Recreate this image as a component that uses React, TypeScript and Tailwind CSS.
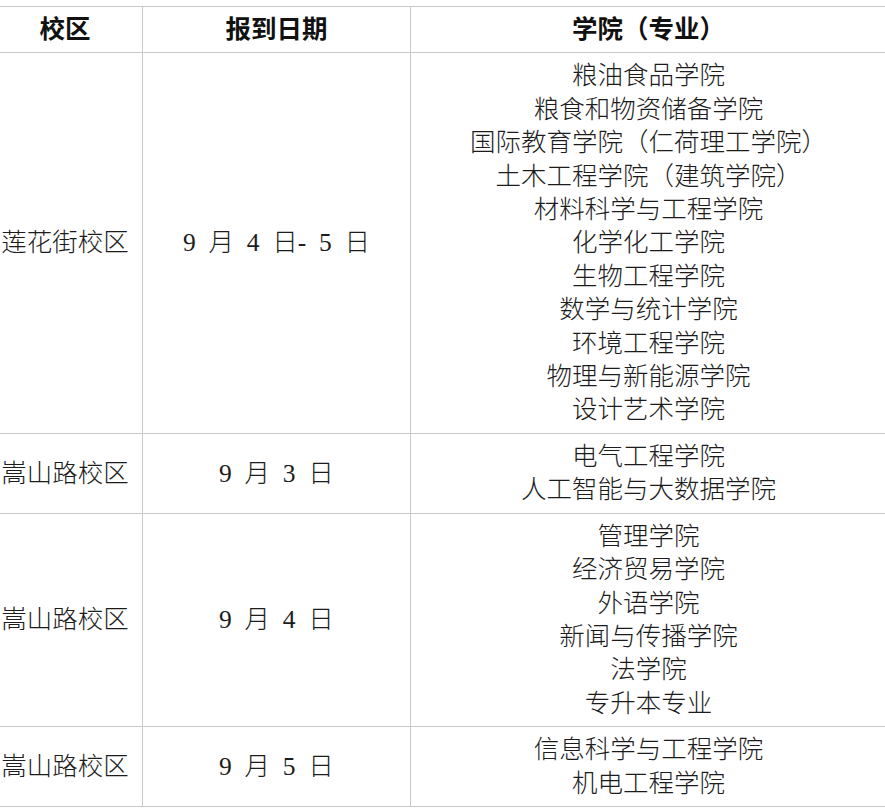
import React from 'react';

interface Row {
  campus: string;
  date: string;
  colleges: string[];
}

const rows: Row[] = [
  {
    campus: '莲花街校区',
    date: '9 月 4 日- 5 日',
    colleges: [
      '粮油食品学院',
      '粮食和物资储备学院',
      '国际教育学院（仁荷理工学院）',
      '土木工程学院（建筑学院）',
      '材料科学与工程学院',
      '化学化工学院',
      '生物工程学院',
      '数学与统计学院',
      '环境工程学院',
      '物理与新能源学院',
      '设计艺术学院',
    ],
  },
  {
    campus: '嵩山路校区',
    date: '9 月 3 日',
    colleges: ['电气工程学院', '人工智能与大数据学院'],
  },
  {
    campus: '嵩山路校区',
    date: '9 月 4 日',
    colleges: ['管理学院', '经济贸易学院', '外语学院', '新闻与传播学院', '法学院', '专升本专业'],
  },
  {
    campus: '嵩山路校区',
    date: '9 月 5 日',
    colleges: ['信息科学与工程学院', '机电工程学院'],
  },
];

const font = "font-['Liberation_Serif','Noto_Sans_CJK_SC',serif]";

const App: React.FC = () => {
  return (
    <div className={`w-[885px] h-[812px] overflow-hidden bg-white pt-[6px] ${font}`}>
      <table className="-ml-[13px] w-[899px] table-fixed border-collapse text-[25.5px] leading-[33.4px] text-[#1c1c1c]">
        <colgroup>
          <col className="w-[155px]" />
          <col className="w-[268px]" />
          <col className="w-[476px]" />
        </colgroup>
        <thead>
          <tr>
            <th className="border border-[#c9c9c9] py-[6px] text-center font-bold text-[#111]">校区</th>
            <th className="border border-[#c9c9c9] py-[6px] text-center font-bold text-[#111]">报到日期</th>
            <th className="border border-[#c9c9c9] py-[6px] text-center font-bold text-[#111]">学院（专业）</th>
          </tr>
        </thead>
        <tbody>
          {rows.map((row, i) => (
            <tr key={i}>
              <td className="border border-[#c9c9c9] py-[6px] text-center align-middle font-light">
                {row.campus}
              </td>
              <td className="border border-[#c9c9c9] py-[6px] text-center align-middle font-light [word-spacing:0.25em]">
                {row.date}
              </td>
              <td className="border border-[#c9c9c9] py-[6px] text-center align-middle font-light">
                {row.colleges.map((c) => (
                  <div key={c}>{c}</div>
                ))}
              </td>
            </tr>
          ))}
        </tbody>
      </table>
    </div>
  );
};

export default App;
